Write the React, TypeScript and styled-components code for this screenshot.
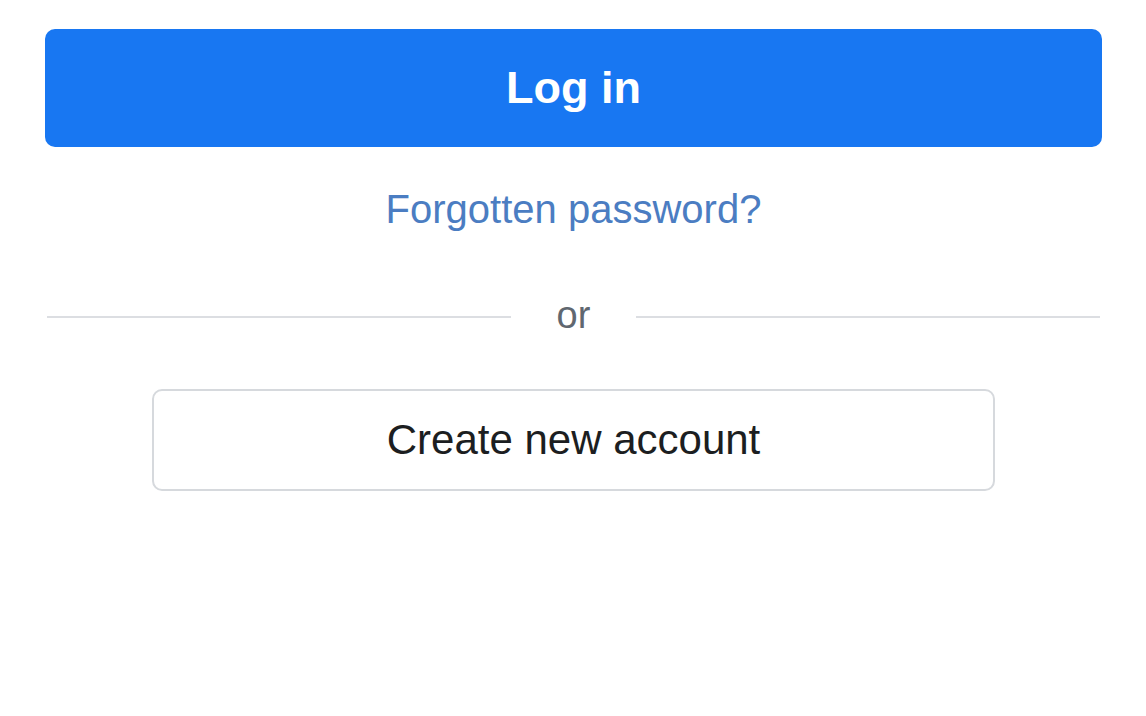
import React, { FC } from "react";
import styled, { createGlobalStyle } from "styled-components";

const GlobalStyle = createGlobalStyle`
  html, body {
    margin: 0;
    padding: 0;
    background: #ffffff;
  }
  body {
    font-family: "Liberation Sans", Arial, Helvetica, sans-serif;
    -webkit-font-smoothing: antialiased;
  }
`;

const Page = styled.div`
  width: 1146px;
  height: 716px;
  box-sizing: border-box;
  padding: 29px 44px 0 45px;
  display: flex;
  flex-direction: column;
  align-items: center;
`;

const LoginButton = styled.button`
  width: 100%;
  height: 118px;
  border: none;
  border-radius: 10px;
  background: #1877f2;
  color: #ffffff;
  font-family: inherit;
  font-size: 45px;
  font-weight: 700;
  cursor: pointer;
`;

const ForgotLink = styled.a`
  margin-top: 38px;
  font-size: 40px;
  line-height: 48px;
  color: #4b7dc2;
  text-decoration: none;
`;

const Divider = styled.div`
  margin-top: 60px;
  width: 100%;
  height: 48px;
  display: flex;
  align-items: center;
  padding: 0 2px;
  box-sizing: border-box;
`;

const Line = styled.div`
  flex: 1;
  height: 2px;
  background: #dcdee2;
`;

const Or = styled.span`
  padding: 0 46px 4px;
  font-size: 38px;
  line-height: 48px;
  color: #606770;
`;

const CreateButton = styled.button`
  margin-top: 48px;
  width: 843px;
  height: 102px;
  box-sizing: border-box;
  border: 2px solid #d6d9dd;
  border-radius: 10px;
  background: #ffffff;
  color: #1c1e21;
  font-family: inherit;
  font-size: 42px;
  cursor: pointer;
`;

const App: FC = () => {
  return (
    <>
      <GlobalStyle />
      <Page>
        <LoginButton>Log in</LoginButton>
        <ForgotLink href="#">Forgotten password?</ForgotLink>
        <Divider>
          <Line />
          <Or>or</Or>
          <Line />
        </Divider>
        <CreateButton>Create new account</CreateButton>
      </Page>
    </>
  );
};

export default App;
